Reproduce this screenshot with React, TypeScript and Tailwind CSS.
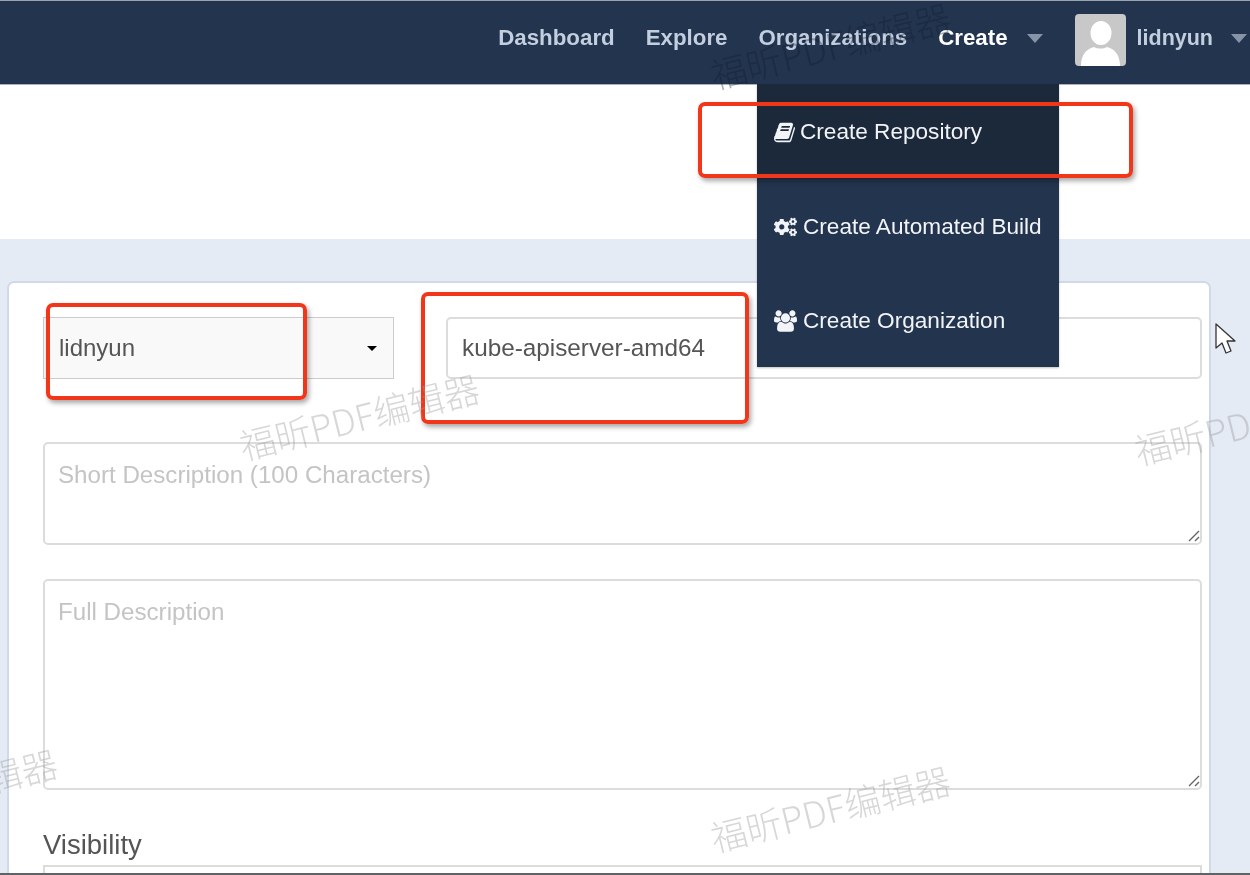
import { FaCogs } from "react-icons/fa";

const sans = "font-['Liberation_Sans',Arial,sans-serif]";
const mark = "absolute whitespace-nowrap font-['Noto_Sans_CJK_SC','Noto_Sans',sans-serif] font-light text-[36px] leading-none -rotate-[14deg] origin-left pointer-events-none";

function Caret({ className }: { className: string }) {
  return <span className={"inline-block w-0 h-0 border-l-[8px] border-r-[8px] border-t-[9px] border-l-transparent border-r-transparent " + className} />;
}

function NavLink({ children, active }: { children: string; active?: boolean }) {
  return <span className={"text-[22.3px] font-bold whitespace-nowrap mb-[3px] " + (active ? "text-white" : "text-[#c3cede]")}>{children}</span>;
}

function MenuItem({ icon, label, dark, h }: { icon: React.ReactNode; label: string; dark?: boolean; h: string }) {
  return (
    <div className={"flex items-center pl-[17px] gap-[6px] text-[22.6px] text-[#f2f4f7] whitespace-nowrap pt-[2px] " + h + (dark ? " bg-[#1b293b]" : "")}>
      {icon}
      <span>{label}</span>
    </div>
  );
}

function Field({ placeholder, h, mt }: { placeholder: string; h: string; mt: string }) {
  return (
    <div className={"relative " + mt}>
      <textarea
        readOnly
        placeholder={placeholder}
        className={"block w-full resize-none px-[13px] py-[15px] border-2 border-[#dcdcdc] rounded-[5px] text-[24.15px] leading-[32px] text-[#555555] placeholder:text-[#c4c4c4] outline-none " + h}
      />
      <svg className="absolute right-[2px] bottom-[3px] w-[12px] h-[12px]" viewBox="0 0 12 12" stroke="#666666" strokeWidth="1.4" fill="none">
        <path d="M1 11L11 1M7 11l4-4" />
      </svg>
    </div>
  );
}

const redBox = "absolute border-[4px] border-[#f1361a] rounded-[7px] shadow-[2px_3px_5px_rgba(0,0,0,0.35)] pointer-events-none";

export default function App() {
  return (
    <div className={"relative w-[1250px] h-[875px] overflow-hidden flex flex-col bg-white blur-[0.4px] " + sans}>
      <header className="h-[85px] shrink-0 flex items-center justify-end bg-[#23344f] border-t border-t-[#9aa3ad] border-b border-b-[#aab2bd] pr-[3px] pb-[6px]">
        <nav className="flex items-center">
          <NavLink>Dashboard</NavLink>
          <span className="w-[31px]" />
          <NavLink>Explore</NavLink>
          <span className="w-[31px]" />
          <NavLink>Organizations</NavLink>
          <span className="w-[31px]" />
          <NavLink active>Create</NavLink>
          <Caret className="ml-[19px] mr-[32px] border-t-[#8794a8] mb-[3px]" />
          <div className="w-[51px] h-[52px] rounded-[4px] bg-[#c8c8c8] overflow-hidden">
            <svg viewBox="0 0 51 52" className="w-full h-full" fill="#ffffff">
              <ellipse cx="26" cy="19" rx="10.5" ry="12" />
              <path d="M6 52c0-11 5-17 13-19 4 2 9 2 13 0 8 2 13 8 13 19z" />
            </svg>
          </div>
          <span className="ml-[11px] text-[21.5px] font-bold text-[#c3cede] mb-[3px]">lidnyun</span>
          <Caret className="ml-[18px] border-t-[#8794a8] mb-[3px]" />
        </nav>
      </header>

      <div className="h-[154px] shrink-0 bg-white" />

      <main className="flex-1 min-h-0 overflow-hidden bg-[#e5ebf5] pl-[7px] pr-[39px] pt-[42px]">
        <div className="h-[700px] bg-white border-2 border-[#d0d9e7] rounded-[7px] pl-[34px] pr-[7px] pt-[34px]">
          <div className="flex gap-[52px]">
            <div className="w-[351px] h-[62px] shrink-0 flex items-center justify-between pl-[15px] pr-[16px] bg-[#f9f9f9] border border-[#cccccc] text-[24px] text-[#555555]">
              <span>lidnyun</span>
              <span className="w-0 h-0 border-l-[5px] border-r-[5px] border-t-[5px] border-l-transparent border-r-transparent border-t-black" />
            </div>
            <input
              readOnly
              value="kube-apiserver-amd64"
              className="flex-1 min-w-0 h-[62px] px-[14px] border-2 border-[#dcdcdc] rounded-[5px] text-[24.3px] text-[#555555] bg-white outline-none"
            />
          </div>
          <Field placeholder="Short Description (100 Characters)" h="h-[103px]" mt="mt-[63px]" />
          <Field placeholder="Full Description" h="h-[211px]" mt="mt-[34px]" />
          <div className="mt-[37px] text-[27.5px] leading-[36px] text-[#555555]">Visibility</div>
          <div className="h-[60px] mt-[2px] border-2 border-[#dcdcdc] bg-white" />
        </div>
      </main>

      <div className="h-[2px] shrink-0 bg-[#5f6367]" />

      <span className={mark + " left-[711px] top-[56px] text-[#0f1c30]/35"}>福昕PDF编辑器</span>
      <span className={mark + " left-[-182px] top-[6px] text-[#0f1c30]/35"}>福昕PDF编辑器</span>

      {/* dropdown */}
      <div className="absolute left-[757px] top-[84px] w-[302px] bg-[#23344f] shadow-[0_1px_2px_rgba(0,0,0,0.25)]">
        <MenuItem
          dark
          h="h-[94px]"
          icon={
            <svg viewBox="0 128 1664 1536" className="w-[21px] h-[21px] -mr-[1px]" fill="currentColor">
              <path d="M1639 478q40 57 18 129l-275 906q-19 64-76.5 107.5t-122.5 43.5h-923q-77 0-148.5-53.5t-99.5-131.5q-24-67-2-127 0-4 3-27t4-37q1-8-3-21.5t-3-19.5q2-11 8-21t16.5-23.5 16.5-23.5q23-38 45-91.5t30-91.5q3-10 .5-30t-.5-28q3-11 17-28t17-23q21-36 42-92t25-90q1-9-2.5-32t.5-28q4-13 22-30.5t22-22.5q19-26 42.5-84.5t27.5-96.5q1-8-3-25.5t-2-26.5q2-8 9-18t18-23 17-21q8-12 16.5-30.5t15-35 16-36 19.5-32 26.5-23.5 36-11.5 47.5 5.5l-1 3q38-9 51-9h761q74 0 114 56t18 130l-274 906q-36 119-71.5 153.5t-128.5 34.5h-869q-27 0-38 15-11 16-1 43 24 70 144 70h923q29 0 56-15.5t35-41.5l300-987q7-22 5-57 38 15 59 43zm-1064 2q-4 13 2 22.5t20 9.5h608q13 0 25.5-9.5t16.5-22.5l21-64q4-13-2-22.5t-20-9.5h-608q-13 0-25.5 9.5t-16.5 22.5zm-83 256q-4 13 2 22.5t20 9.5h608q13 0 25.5-9.5t16.5-22.5l21-64q4-13-2-22.5t-20-9.5h-608q-13 0-25.5 9.5t-16.5 22.5z" />
            </svg>
          }
          label="Create Repository"
        />
        <MenuItem h="h-[95px]" icon={<FaCogs className="w-[23px] h-[22px]" />} label="Create Automated Build" />
        <MenuItem
          h="h-[94px]"
          icon={
            <svg viewBox="0 128 1920 1536" className="w-[23px] h-[22px]" fill="currentColor">
              <path d="M593 896q-162 5-265 128h-134q-82 0-138-40.5t-56-118.5q0-353 124-353 6 0 43.5 21t97.5 42.5 119 21.5q67 0 133-23-5 37-5 66 0 139 81 256zm1071 637q0 120-73 189.5t-194 69.5h-874q-121 0-194-69.5t-73-189.5q0-53 3.5-103.5t14-109 26.5-108.5 43-97.5 62-81 85.5-53.5 111.5-20q10 0 43 21.5t73 48 107 48 135 21.5 135-21.5 107-48 73-48 43-21.5q61 0 111.5 20t85.5 53.5 62 81 43 97.5 26.5 108.5 14 109 3.5 103.5zm-1024-1277q0 106-75 181t-181 75-181-75-75-181 75-181 181-75 181 75 75 181zm704 384q0 159-112.5 271.5t-271.5 112.5-271.5-112.5-112.5-271.5 112.5-271.5 271.5-112.5 271.5 112.5 112.5 271.5zm576 225q0 78-56 118.5t-138 40.5h-134q-103-123-265-128 81-117 81-256 0-29-5-66 66 23 133 23 59 0 119-21.5t97.5-42.5 43.5-21q124 0 124 353zm-128-609q0 106-75 181t-181 75-181-75-75-181 75-181 181-75 181 75 75 181z" />
            </svg>
          }
          label="Create Organization"
        />
      </div>

      {/* annotations */}
      <div className={redBox + " left-[698px] top-[102px] w-[435px] h-[76px]"} />
      <div className={redBox + " left-[46px] top-[303px] w-[261px] h-[97px]"} />
      <div className={redBox + " left-[421px] top-[292px] w-[328px] h-[132px]"} />

      {/* watermarks */}
      <span className={mark + " left-[240px] top-[427px] text-[#9a9a9a]/40"}>福昕PDF编辑器</span>
      <span className={mark + " left-[711px] top-[819px] text-[#9a9a9a]/40"}>福昕PDF编辑器</span>
      <span className={mark + " left-[1135px] top-[432px] text-[#9a9a9a]/40"}>福昕PDF编辑器</span>
      <span className={mark + " left-[-182px] top-[802px] text-[#9a9a9a]/40"}>福昕PDF编辑器</span>

      {/* mouse cursor */}
      <svg className="absolute left-[1214px] top-[322px] w-[24px] h-[34px]" viewBox="0 0 24 34">
        <path d="M2 2v24l6-5 4 10 5-2-4-10h8z" fill="#ffffff" stroke="#333333" strokeWidth="1.3" strokeLinejoin="round" />
      </svg>
    </div>
  );
}
